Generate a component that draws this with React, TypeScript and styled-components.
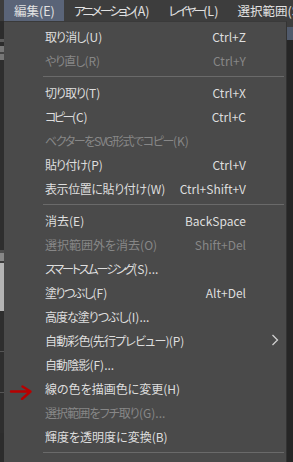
import React, { Fragment } from 'react';
import styled, { createGlobalStyle } from 'styled-components';

const GlobalStyle = createGlobalStyle`
  html, body {
    margin: 0;
    padding: 0;
    background: #262626;
  }
  body {
    width: 293px;
    height: 462px;
    overflow: hidden;
    font-family: "Noto Sans CJK JP", "Noto Sans", sans-serif;
    font-size: 12px;
    font-feature-settings: "palt";
  }
`;

const Screen = styled.div`
  display: flex;
  flex-direction: column;
  width: 293px;
  height: 462px;
  overflow: hidden;
`;

const MenuBar = styled.div`
  display: flex;
  height: 21px;
  flex-shrink: 0;
  padding-left: 4px;
  background: #3d3d3d;
  white-space: nowrap;
  overflow: hidden;
`;

const BarItem = styled.div<{ $active?: boolean }>`
  display: flex;
  align-items: center;
  flex-shrink: 0;
  padding: 0 9px 0 10px;
  font-size: 12.5px;
  color: #e2e2e2;
  background: ${(p) => (p.$active ? '#5a6478' : 'transparent')};
`;

// the reference's UI font has narrower kana than Noto, so the Japanese part gets tracking
const Jp = styled.span<{ $ls?: number }>`
  letter-spacing: ${(p) => p.$ls ?? 0}px;
`;

const Body = styled.div`
  display: flex;
  flex: 1;
  min-height: 0;
`;

const LeftStrip = styled.div`
  display: flex;
  flex-direction: column;
  width: 4px;
  flex-shrink: 0;
  background: #2c2c2c;
`;

const StripBlock = styled.div<{ $h: number; $c: string }>`
  height: ${(p) => p.$h}px;
  flex-shrink: 0;
  background: ${(p) => p.$c};
`;

const Dropdown = styled.div`
  display: flex;
  flex-direction: column;
  width: 282px;
  flex-shrink: 0;
  padding-top: 2px;
  background: #4a4a4a;
  border-top: 1px solid #3a3a3a;
  border-right: 1px solid #333333;
`;

const Row = styled.div<{ $disabled?: boolean }>`
  display: grid;
  grid-template-columns: 41px 1fr auto 40px;
  align-items: center;
  height: 24px;
  flex-shrink: 0;
  color: ${(p) => (p.$disabled ? '#878787' : '#dedede')};
  white-space: nowrap;
`;

const Gutter = styled.div`
  display: flex;
  height: 24px;
`;

const Label = styled.span``;

const Shortcut = styled.span`
  text-align: right;
`;

const SubArrow = styled.div`
  display: flex;
  align-items: center;
  padding-left: 25px;
`;

const Separator = styled.div`
  display: flex;
  align-items: center;
  height: 8px;
  flex-shrink: 0;
  padding: 0 2px 0 39px;
  &::after {
    content: '';
    flex: 1;
    height: 1px;
    background: #6a6a6a;
  }
`;

const RightStrip = styled.div`
  display: flex;
  flex-direction: column;
  flex: 1;
  background: #262626;
`;

type Item =
  | { sep: true }
  | {
      sep?: false;
      label: string;
      key?: string;
      ls?: number;
      disabled?: boolean;
      sub?: boolean;
      mark?: boolean;
    };

const items: Item[] = [
  { label: '取り消し(U)', key: 'Ctrl+Z', ls: -0.9 },
  { label: 'やり直し(R)', key: 'Ctrl+Y', ls: -1, disabled: true },
  { sep: true },
  { label: '切り取り(T)', key: 'Ctrl+X', ls: -1 },
  { label: 'コピー(C)', key: 'Ctrl+C', ls: -2.5 },
  { label: 'ベクターをSVG形式でコピー(K)', ls: -1.4, disabled: true },
  { label: '貼り付け(P)', key: 'Ctrl+V', ls: -0.9 },
  { label: '表示位置に貼り付け(W)', key: 'Ctrl+Shift+V', ls: -0.4 },
  { sep: true },
  { label: '消去(E)', key: 'BackSpace' },
  { label: '選択範囲外を消去(O)', key: 'Shift+Del', disabled: true },
  { label: 'スマートスムージング(S)...', ls: -2.1 },
  { label: '塗りつぶし(F)', key: 'Alt+Del', ls: -1.5 },
  { label: '高度な塗りつぶし(I)...', ls: -1 },
  { label: '自動彩色(先行プレビュー)(P)', ls: -0.85, sub: true },
  { label: '自動陰影(F)...', ls: -0.9 },
  { label: '線の色を描画色に変更(H)', mark: true },
  { label: '選択範囲をフチ取り(G)...', ls: -0.9, disabled: true },
  { label: '輝度を透明度に変換(B)' },
  { sep: true },
];

// split "名前(X)..." into the Japanese name and the mnemonic tail
function MenuText({ text, ls }: { text: string; ls?: number }) {
  const m = text.match(/^(.*?)(\([A-Z]\).*)$/);
  if (!m) return <Jp $ls={ls}>{text}</Jp>;
  return (
    <>
      <Jp $ls={ls}>{m[1]}</Jp>
      {m[2]}
    </>
  );
}

function RedArrow() {
  return (
    <svg width="41" height="24" viewBox="0 0 41 24">
      <path
        d="M7 15.5 H26 M18.5 10.5 L26.5 15.5 L18 23"
        fill="none"
        stroke="#b80000"
        strokeWidth="2.4"
        strokeLinecap="round"
        strokeLinejoin="round"
      />
    </svg>
  );
}

function Chevron() {
  return (
    <svg width="8" height="12" viewBox="0 0 8 12">
      <path d="M1.5 1 L6.5 6 L1.5 11" fill="none" stroke="#d0d0d0" strokeWidth="1.3" />
    </svg>
  );
}

function App() {
  return (
    <Fragment>
      <GlobalStyle />
      <Screen>
        <MenuBar>
          <BarItem $active>
            <MenuText text="編集(E)" />
          </BarItem>
          <BarItem>
            <MenuText text="アニメーション(A)" ls={-2.6} />
          </BarItem>
          <BarItem>
            <MenuText text="レイヤー(L)" ls={-2.8} />
          </BarItem>
          <BarItem>
            <MenuText text="選択範囲(S)" />
          </BarItem>
        </MenuBar>
        <Body>
          <LeftStrip>
            <StripBlock $h={18} $c="#2c2c2c" />
            <StripBlock $h={3} $c="#5c5c5c" />
            <StripBlock $h={4} $c="#2c2c2c" />
            <StripBlock $h={6} $c="#777777" />
            <StripBlock $h={2} $c="#444444" />
            <StripBlock $h={6} $c="#777777" />
            <StripBlock $h={190} $c="#2e2e2e" />
            <StripBlock $h={3} $c="#505050" />
            <StripBlock $h={8} $c="#888888" />
            <StripBlock $h={2} $c="#3a3a3a" />
            <StripBlock $h={48} $c="#b4b4b4" />
            <StripBlock $h={40} $c="#2e2e2e" />
            <StripBlock $h={1} $c="#555555" />
            <StripBlock $h={40} $c="#2e2e2e" />
            <StripBlock $h={1} $c="#555555" />
            <StripBlock $h={40} $c="#2e2e2e" />
          </LeftStrip>
          <Dropdown>
            {items.map((it, i) =>
              it.sep ? (
                <Separator key={i} />
              ) : (
                <Row key={i} $disabled={it.disabled}>
                  <Gutter>{it.mark && <RedArrow />}</Gutter>
                  <Label>
                    <MenuText text={it.label} ls={it.ls} />
                  </Label>
                  <Shortcut>{it.key ?? ''}</Shortcut>
                  <SubArrow>{it.sub && <Chevron />}</SubArrow>
                </Row>
              )
            )}
          </Dropdown>
          <RightStrip>
            <StripBlock $h={6} $c="#3d3d3d" />
            <StripBlock $h={13} $c="#505a6c" />
          </RightStrip>
        </Body>
      </Screen>
    </Fragment>
  );
}

export default App;
